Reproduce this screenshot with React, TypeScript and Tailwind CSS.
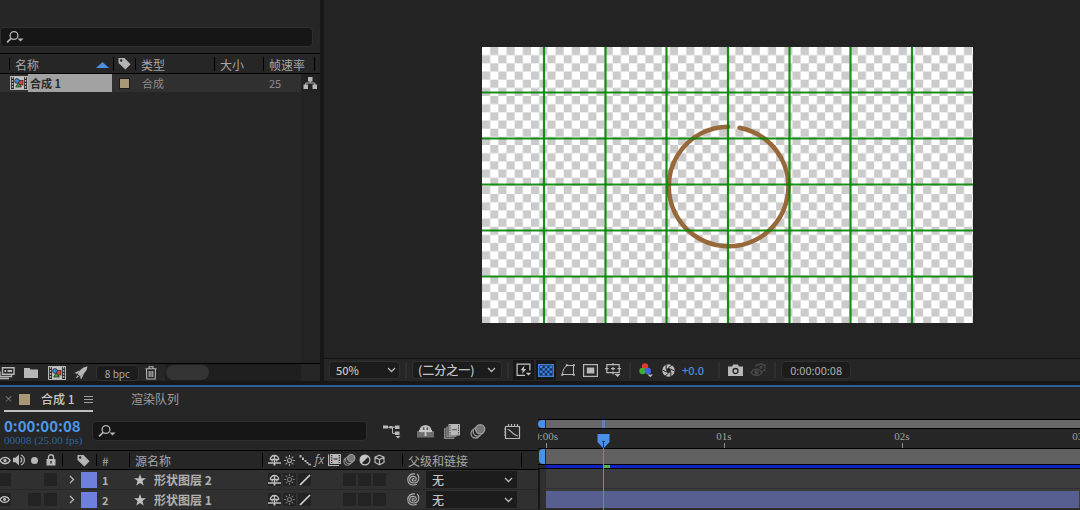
import React from 'react';

type IconProps = { className?: string };

const SearchIcon = () => (
  <svg width="18" height="14" viewBox="0 0 18 14" fill="none" stroke="#b4b4b4" strokeWidth="1.3">
    <circle cx="8" cy="5.5" r="3.9" />
    <path d="M5.2 8.3 1 12.3" strokeWidth="1.6" />
    <path d="M11.5 8.5h6l-3 3z" fill="#b4b4b4" stroke="none" />
  </svg>
);

const TagIcon = () => (
  <svg width="13" height="13" viewBox="0 0 13 13" fill="#b4b4b4" fillRule="evenodd">
    <path d="M.5 1h6L12.6 7.2 7.4 12.6.5 6zM3.2 2.3a1.2 1.2 0 1 0 .01 2.4 1.2 1.2 0 0 0 0-2.4z" />
  </svg>
);

const CompIcon = () => (
  <svg width="18" height="14" viewBox="0 0 18 14">
    <rect x=".5" y=".5" width="17" height="13" fill="#2b2b2b" stroke="#b8b8b8" />
    <path d="M2.5 1v12M15.5 1v12" stroke="#b8b8b8" strokeWidth="1.4" strokeDasharray="1.8 1.2" />
    <rect x="4" y="1" width="10" height="12" fill="#c0c0c0" />
    <rect x="8.5" y="4.5" width="4.5" height="4.5" fill="#e0403a" stroke="#222" strokeWidth=".7" />
    <circle cx="7" cy="5" r="2.4" fill="#3b86d8" stroke="#222" strokeWidth=".7" />
    <path d="m8.5 6.5 2.8 4.500H5.700z" fill="#3f9a35" stroke="#222" strokeWidth=".7" />
  </svg>
);

const FlowIcon = () => (
  <svg width="14" height="14" viewBox="0 0 14 14" fill="#b8b8b8">
    <path d="M5 1h4.500v4.500H5zM.5 8.500H5V13H.5zM9.500 8.500H14V13H9.500z" />
    <path d="M7.200 4v3M2.800 9.500V7h9v2.500" fill="none" stroke="#b8b8b8" />
  </svg>
);

const InterpretIcon = () => (
  <svg width="16" height="14" viewBox="0 0 16 14" fill="none" stroke="#b8b8b8" strokeWidth="1.4">
    <path d="M2.500 1.700h11.500v6.500H2.500z" />
    <path d="M4.500 5h1.600M7.500 5h4.500" strokeWidth="1.8" />
    <path d="M0 5.500V10.500h11.500V8M0 12.500h9" />
  </svg>
);

const FolderIcon = () => (
  <svg width="14" height="12" viewBox="0 0 14 12" fill="#b8b8b8">
    <path d="M0 1h5.5l1.2 1.6H14V11H0z" />
  </svg>
);

const RocketIcon = () => (
  <svg width="14" height="14" viewBox="0 0 14 14" fill="#b8b8b8">
    <path d="M13.500.5C9 1 5.500 4 3.800 8.200l2.200 2C10.500 8.200 13 4.500 13.500.5zM5.700 4.200.5 7l2.900 1zM10 8l-3 5.500-.9-3zM3.500 9.200 1.800 12.500l3.200-1.900z" />
  </svg>
);

const TrashIcon = () => (
  <svg width="12" height="14" viewBox="0 0 12 14" fill="none" stroke="#b8b8b8" strokeWidth="1.1">
    <path d="M.5 2.800h11M4 2.500V.8h4v1.700M1.500 3l.3 10h8.400l.3-10M4.200 5v6M6 5v6M7.800 5v6" />
  </svg>
);

const ChevronDown = ({ className = '' }: IconProps) => (
  <svg className={className} width="9" height="6" viewBox="0 0 9 6" fill="none" stroke="#b8b8b8" strokeWidth="1.3">
    <path d="m1 1 3.500 3.500L8 1" />
  </svg>
);

const FastPreviewIcon = () => (
  <svg width="16" height="14" viewBox="0 0 16 14" fill="none" stroke="#c4c4c4" strokeWidth="1.200">
    <path d="M9 12.400H1.100V1.100h12.800v6.400" />
    <path d="M8.500 2.300 4.600 7.200h2.200L6 11l4.200-5H7.800z" fill="#c4c4c4" stroke="none" />
    <path d="M9.800 9.800h5.400L12.500 12.600z" fill="#c4c4c4" stroke="none" />
  </svg>
);

const TransparencyIcon = () => (
  <svg width="16" height="13" viewBox="0 0 16 13">
    <rect x=".7" y=".7" width="14.600" height="11.600" fill="#14305a" stroke="#3f82dc" strokeWidth="1.400" />
    <path
      d="M2 2h2.400v2.300H2zM6.800 2h2.400v2.300H6.800zM11.600 2H14v2.300h-2.400zM4.400 4.300h2.400v2.400H4.400zM9.200 4.300h2.400v2.400H9.200zM2 6.700h2.400V9H2zM6.800 6.700h2.400V9H6.800zM11.600 6.700H14V9h-2.400zM4.400 9h2.400v2.200H4.400zM9.200 9h2.400v2.200H9.200z"
      fill="#3f82dc"
    />
  </svg>
);

const MaskIcon = () => (
  <svg width="16" height="14" viewBox="0 0 16 14" fill="none" stroke="#b8b8b8">
    <path d="M2.500 11.500C2.700 7 4.500 4 7 2.500h6.500v9z" />
    <path d="M6 1.500h1.500v1.500H6zM13 1.500h1.500v1.500H13zM13 11h1.500v1.500H13zM1.500 11H3v1.500H1.500z" fill="#b8b8b8" strokeWidth=".5" />
  </svg>
);

const RegionIcon = () => (
  <svg width="15" height="13" viewBox="0 0 15 13">
    <rect x=".6" y=".6" width="13.800" height="11.800" fill="none" stroke="#b8b8b8" strokeWidth="1.200" />
    <rect x="3.800" y="3.500" width="7.500" height="6" fill="#b8b8b8" />
  </svg>
);

const GuidesIcon = () => (
  <svg width="16" height="16" viewBox="0 0 16 16" fill="none" stroke="#b8b8b8" strokeWidth="1.200">
    <path d="M1.800 2.600h12.400v8H1.800zM8 1v2.500M8 9.500v3M0 6.600h3.500M12.500 6.600H16M6 6.600h4M8 5v3.200" />
    <path d="M9.500 12h6l-3 3z" fill="#b8b8b8" stroke="none" />
  </svg>
);

const ChannelIcon = () => (
  <svg width="15" height="15" viewBox="0 0 15 15">
    <circle cx="6" cy="3.500" r="3.200" fill="#e8352b" />
    <circle cx="3.500" cy="8" r="3.200" fill="#3fae35" />
    <circle cx="8.800" cy="8" r="3.200" fill="#3f62e8" />
    <path d="M8.500 11.500h5.500L11.300 14.300z" fill="#b8b8b8" />
  </svg>
);

const ApertureIcon = () => (
  <svg width="13" height="13" viewBox="0 0 13 13">
    <circle cx="6.500" cy="6.500" r="6.200" fill="#b8b8b8" />
    <path
      d="M6.500 3.800 10 .9M8.800 5.100l3.800 2M8.800 7.900l0 4.400M6.500 9.200 3 12.100M4.200 7.900.4 5.900M4.200 5.100V.7"
      stroke="#262626"
      strokeWidth="1"
    />
    <path d="m6.500 3.800 2.300 1.300v2.800L6.500 9.200 4.200 7.900V5.100z" fill="#262626" />
  </svg>
);

const CameraIcon = () => (
  <svg width="15" height="13" viewBox="0 0 15 13">
    <path d="M0 2.500h4L5.200.5h4.600L11 2.500h4V12H0z" fill="#b8b8b8" />
    <circle cx="7.500" cy="7" r="2.500" fill="none" stroke="#262626" strokeWidth="1.300" />
  </svg>
);

const ShowSnapshotIcon = () => (
  <svg width="16" height="14" viewBox="0 0 16 14" fill="none" stroke="#464646" strokeWidth="1.300">
    <path d="M1 9.300c2.500-4.200 8.500-4.200 11 0-2.500 4.200-8.500 4.200-11 0z" />
    <circle cx="6.500" cy="9.300" r="1.600" fill="#464646" />
    <path d="M6 4V2h2.500l.8-1h3l.8 1H15v5.500h-2.500" />
    <circle cx="11" cy="4.300" r="1" />
  </svg>
);

const FlowchartIcon = () => (
  <svg width="18" height="15" viewBox="0 0 18 15" fill="#b8b8b8">
    <path d="M0 1.500h5v3H0zM6.500 2h3v2.500h-3zM12 1.500h4.500v3.500H12zM12 7.500h4.500V11H12z" />
    <path d="M5 3.200h7M9.500 3.200v6.200H12" fill="none" stroke="#b8b8b8" />
    <path d="M12.500 12h5L15 14.500z" />
  </svg>
);

const ShyToolIcon = () => (
  <svg width="17" height="14" viewBox="0 0 17 14">
    <path d="M0 7h17v6.500H0z" fill="#6e6e6e" />
    <path d="M2.500 6.500a6 5.500 0 0 1 12 0z" fill="#b8b8b8" />
    <path d="M2 7h13M8.500 2v10" stroke="#c8c8c8" strokeWidth="1.800" />
    <path d="M5 5v3.500M12 5v3.500" stroke="#c8c8c8" strokeWidth="1.200" />
    <path d="M6.800 3.500v2.500M10.200 3.500v2.500" stroke="#262626" strokeWidth="1" />
  </svg>
);

const FrameBlendToolIcon = () => (
  <svg width="16" height="15" viewBox="0 0 16 15">
    <path d="M.8 4v10.200h9.500M3 2.500v9.800h9.500" fill="none" stroke="#8c8c8c" strokeWidth="1.500" />
    <path d="M4.500 0H16v11.500H4.500z" fill="#b8b8b8" />
    <path d="M6 1v10M14.500 1v10" stroke="#333" strokeDasharray="1.200 1.200" />
    <path d="M8 5.700h5" stroke="#555" />
  </svg>
);

const MotionBlurIcon = ({ className = '' }: IconProps) => (
  <svg className={className} viewBox="0 0 16 15" fill="none" stroke="#9a9a9a" strokeWidth="1.300">
    <circle cx="5.500" cy="9.500" r="4.500" />
    <circle cx="7.600" cy="7.600" r="4.500" fill="#262626" />
    <circle cx="10.200" cy="5.300" r="4.600" fill="#767676" stroke="#a0a0a0" />
  </svg>
);

const GraphIcon = () => (
  <svg width="17" height="17" viewBox="0 0 17 17" fill="none" stroke="#b8b8b8" strokeWidth="1.200">
    <path d="M1.500 3.500h14v12h-14zM4.500 1v2.500M7.500 1v2.500M10.500 1v2.500M13.500 1v2.500M0 6h1.500M0 9h1.500M0 12h1.500" />
    <path d="M3.500 6.500c4 0 4.500 6 10.500 6.500" />
  </svg>
);

const EyeIcon = () => (
  <svg width="12" height="9" viewBox="0 0 12 9" fill="none" stroke="#c4c4c4" strokeWidth="1.300">
    <path d="M0 4.500C2.300.2 7.800.2 10.100 4.500 7.800 8.800 2.300 8.800 0 4.500z" />
    <circle cx="5" cy="4.500" r="1.600" fill="#c4c4c4" stroke="none" />
  </svg>
);

const SpeakerIcon = () => (
  <svg width="13" height="12" viewBox="0 0 13 12" fill="none" stroke="#b8b8b8" strokeWidth="1.200">
    <path d="M0 3.800h2.500L6 .6v10.800L2.500 8.200H0z" fill="#b8b8b8" stroke="none" />
    <path d="M7.500 3.500c1.500 1.500 1.500 3.500 0 5M8 1c4.500 2 4.500 8 0 10" />
  </svg>
);

const LockIcon = () => (
  <svg width="10" height="12" viewBox="0 0 10 12">
    <path d="M.5 5h9v6.500h-9z" fill="#b8b8b8" />
    <path d="M2.500 5.500V3.200a2.500 2.500 0 0 1 5 0v2.300" fill="none" stroke="#b8b8b8" strokeWidth="1.400" />
    <path d="M5 7v2.500" stroke="#262626" strokeWidth="1.400" />
  </svg>
);

const ShyIcon = () => (
  <svg className="shrink-0" width="13" height="12" viewBox="0 0 13 12" fill="none" stroke="#c0c0c0" strokeWidth="1.300">
    <path d="M2.200 5.500a4.300 4 0 0 1 8.600 0M0 9h13M6.500 2v8.500M2.200 5.500h8.600M4.200 5.500v2M8.800 5.500v2M5.500 10.800h2" />
  </svg>
);

const SunIcon = ({ className = '' }: IconProps) => (
  <svg className={className} width="11" height="11" viewBox="0 0 11 11" fill="none" stroke="currentColor" strokeWidth="1.100">
    <circle cx="5.500" cy="5.500" r="2" />
    <path d="M5.500 0v2.200M5.500 8.800V11M0 5.500h2.200M8.800 5.500H11M1.700 1.700 3.200 3.200M7.800 7.800l1.500 1.500M1.700 9.300l1.500-1.500M7.800 3.200l1.500-1.500" />
  </svg>
);

const QualityHeadIcon = () => (
  <svg width="12" height="11" viewBox="0 0 12 11" fill="#b8b8b8">
    <path d="M.5 0h2v2.500h-2zM3 2.500h2V5H3zM5.500 5h2v2h-2zM7.500 7h2v1.800h-2zM9.300 8.800H12v1.500H9.300z" />
  </svg>
);

const QualityIcon = () => (
  <svg width="12" height="12" viewBox="0 0 12 12" stroke="#d0d0d0" strokeWidth="1.700">
    <path d="M1 11 11 1" />
  </svg>
);

const FilmIcon = () => (
  <svg width="13" height="12" viewBox="0 0 13 12">
    <path d="M.6.5v11H11" fill="none" stroke="#b8b8b8" strokeWidth="1.200" />
    <path d="M2 0h11v10H2z" fill="#b8b8b8" />
    <path d="M3.700 1v8M11.300 1v8" stroke="#222" strokeWidth="1.200" strokeDasharray="1.300 1" />
    <path d="M5.500 5h4" stroke="#222" />
  </svg>
);

const AdjustIcon = () => (
  <svg width="12" height="12" viewBox="0 0 12 12">
    <circle cx="6" cy="6" r="4.900" fill="none" stroke="#c4c4c4" strokeWidth="1.200" />
    <path d="M2.500 9.500A4.900 4.900 0 0 1 9.500 2.500z" fill="#c4c4c4" />
  </svg>
);

const CubeIcon = () => (
  <svg width="11" height="12" viewBox="0 0 11 12" fill="none" stroke="#b8b8b8" strokeWidth="1.200">
    <path d="m5.500 1.200 4.500 2v5.300l-4.500 2.300L1 8.500V3.200zM1 3.200l4.500 2.300L10 3.200M5.500 5.500v5" />
  </svg>
);

const SpiralIcon = () => (
  <svg width="13" height="13" viewBox="0 0 13 13" fill="none" stroke="#b0b0b0" strokeWidth="1.100">
    <path d="M7.200 6.300c-.3-1.100-2.200-.8-2.100.6.100 1.700 4.100 1.700 4.200-1.100 0-3.300-6.600-3.500-6.700 1 0 4.500 9 4.400 9.200-1.600.1-1.900-.7-3.300-1.600-4.200M8 1C4.500.2.800 2.500.8 6.500c0 2.800 2 5.200 5 5.500 1.500.1 2.800-.2 4-.9" />
  </svg>
);

const StarIcon = () => (
  <svg width="12" height="12" viewBox="0 0 12 12" fill="#c0c0c0">
    <path d="M6 0 7.500 4.300H12L8.400 7l1.300 4.500L6 8.900l-3.700 2.600L3.600 7 0 4.300h4.500z" />
  </svg>
);

const Divider = () => <div className="h-4 w-[2px] shrink-0 bg-[#303030]" />;

const SearchField = ({ label }: { label: string }) => (
  <label className="flex h-5 items-center rounded-sm border border-[#2f2f2f] bg-[#161616] pl-[5px]">
    <SearchIcon />
    <input aria-label={label} type="text" className="ml-1 min-w-0 flex-1 bg-transparent text-xs outline-none" />
  </label>
);

const ProjectPanel = () => (
  <section className="flex w-[320px] shrink-0 flex-col bg-[#262626]">
    <div className="pt-[27px] pr-[7px] pb-[6px]">
      <SearchField label="搜索项目" />
    </div>
    <div className="flex flex-1 flex-col">
      <table className="w-full table-fixed border-t border-black text-xs">
        <colgroup>
          <col className="w-[10px]" />
          <col className="w-[104px]" />
          <col className="w-[22px]" />
          <col className="w-[79px]" />
          <col className="w-[49px]" />
          <col className="w-[37px]" />
          <col />
        </colgroup>
        <thead className="text-left text-[#a6a6a6]">
          <tr className="h-5 border-b border-black">
            <th><div className="h-3 border-r border-black" /></th>
            <th className="font-normal">
              <div className="flex h-[14px] items-center justify-between border-r border-black pt-[2px] pr-1 pl-[5px]">
                名称
                <svg width="13" height="6" viewBox="0 0 13 6" fill="#4a8fe8"><path d="M6.500 0 13 6H0z" /></svg>
              </div>
            </th>
            <th>
              <div className="flex h-3 items-center justify-center border-r border-black"><TagIcon /></div>
            </th>
            <th className="font-normal">
              <div className="flex h-[14px] items-center border-r border-black pt-[2px] pl-[5px]">类型</div>
            </th>
            <th className="font-normal">
              <div className="flex h-[14px] items-center border-r border-black pt-[2px] pl-[5px]">大小</div>
            </th>
            <th colSpan={2} className="pr-[5px] font-normal">
              <div className="flex h-[14px] items-center border-r border-black pt-[2px] pl-[5px] whitespace-nowrap">帧速率</div>
            </th>
          </tr>
        </thead>
        <tbody>
          <tr className="h-[18px] bg-[#303030] text-[#8c8c8c]">
            <td colSpan={2}>
              <div className="flex h-[18px] items-center pr-[2px] pl-[10px]">
                <CompIcon />
                <span className="flex h-[18px] flex-1 items-center bg-[#a2a2a2] pl-[2px] text-[11px] font-bold text-[#2a2a2a]">合成 1</span>
              </div>
            </td>
            <td><div className="ml-[5px] size-[11px] border border-[#1c1c1c] bg-[#a89878]" /></td>
            <td className="pl-[6px] text-[11px] leading-4">合成</td>
            <td />
            <td className="pl-[5px] text-[11px] leading-4">25</td>
            <td className="bg-[#222222]"><div className="flex pl-[2px]"><FlowIcon /></div></td>
          </tr>
        </tbody>
      </table>
      <div className="ml-auto w-[19px] flex-1 bg-[#232323]" />
    </div>
    <div className="flex h-[18px] items-center border-t border-black text-[#b8b8b8]">
      <button aria-label="解释素材"><InterpretIcon /></button>
      <button aria-label="新建文件夹" className="ml-2"><FolderIcon /></button>
      <button aria-label="新建合成" className="ml-[10px]"><CompIcon /></button>
      <button aria-label="项目设置" className="ml-2"><RocketIcon /></button>
      <button className="ml-2 h-4 w-[43px] rounded-sm border border-[#303030] bg-[#1c1c1c] text-[10px] leading-4 text-[#a8a8a8]">8 bpc</button>
      <button aria-label="删除" className="ml-[6px]"><TrashIcon /></button>
      <div className="mr-[19px] ml-2 h-full flex-1 bg-[#1f1f1f] px-[1px] pt-[1px]">
        <div className="h-[15px] w-[43px] rounded-full bg-[#343434]" />
      </div>
    </div>
  </section>
);

const verticalGuides = [62, 123.5, 184.5, 246, 307.5, 368.5, 430];
const horizontalGuides = [45.5, 91.5, 137.5, 183.5, 229.5];

const Preview = () => (
  <svg width="491" height="276" viewBox="0 0 491 276">
    <defs>
      <pattern id="checker" width="16.340" height="16.340" patternUnits="userSpaceOnUse">
        <rect width="16.340" height="16.340" fill="#fff" />
        <path d="M8.170 0h8.170v8.170H8.170zM0 8.170h8.170v8.170H0z" fill="#cbcbcb" />
      </pattern>
    </defs>
    <rect width="491" height="276" fill="url(#checker)" />
    <path d="M257.500 80.700A59.800 59.800 0 1 1 246 79.700" fill="none" stroke="#96683a" strokeWidth="4.500" strokeLinecap="round" />
    <g stroke="#008500" strokeOpacity=".9" strokeWidth="2.200">
      {verticalGuides.map((x) => <path key={x} d={`M${x} 0V276`} />)}
      {horizontalGuides.map((y) => <path key={y} d={`M0 ${y}H491`} />)}
    </g>
  </svg>
);

const ViewerPanel = () => (
  <section className="flex min-w-0 flex-1 flex-col bg-[#232323]">
    <div className="flex flex-1 items-center justify-center pt-3 pl-[50px]">
      <Preview />
    </div>
    <div className="flex h-[23px] items-center border-t border-[#141414] bg-[#262626] pl-[5px] text-[11px] font-medium text-[#c4c4c4]">
      <div className="relative mr-[5px] flex items-center">
        <select aria-label="放大率" className="h-[18px] w-[71px] appearance-none rounded-sm border border-[#303030] bg-[#1c1c1c] pl-[6px] leading-4 outline-none">
          <option>50%</option>
        </select>
        <ChevronDown className="pointer-events-none absolute right-1" />
      </div>
      <Divider />
      <div className="relative mx-[5px] flex items-center">
        <select aria-label="分辨率" className="h-[18px] w-[90px] appearance-none rounded-sm border border-[#303030] bg-[#1c1c1c] pl-[5px] text-xs leading-4 outline-none">
          <option>(二分之一)</option>
        </select>
        <ChevronDown className="pointer-events-none absolute right-[6px]" />
      </div>
      <Divider />
      <button aria-label="快速预览" className="ml-1 flex h-5 w-[21px] items-center justify-center bg-[#181818]"><FastPreviewIcon /></button>
      <button aria-label="透明网格" className="ml-[2px] flex h-5 w-5 items-center justify-center bg-[#181818]"><TransparencyIcon /></button>
      <button aria-label="蒙版可见性" className="ml-1"><MaskIcon /></button>
      <button aria-label="目标区域" className="ml-[7px]"><RegionIcon /></button>
      <button aria-label="网格和参考线" className="mr-2 ml-[7px]"><GuidesIcon /></button>
      <Divider />
      <button aria-label="通道" className="ml-2"><ChannelIcon /></button>
      <button aria-label="重置曝光度" className="ml-2"><ApertureIcon /></button>
      <button className="mr-[14px] ml-[7px] text-[#4a90d9]">+0.0</button>
      <Divider />
      <button aria-label="拍摄快照" className="ml-2"><CameraIcon /></button>
      <button aria-label="显示快照" className="mr-2 ml-[7px]"><ShowSnapshotIcon /></button>
      <Divider />
      <button className="ml-[5px] h-[18px] w-[70px] rounded-sm border border-[#303030] bg-[#1c1c1c] leading-4 font-normal text-[#b0b0b0]">0:00:00:08</button>
    </div>
  </section>
);

const Box = ({ children }: { children?: React.ReactNode }) => (
  <div className="flex h-[13px] w-[13px] items-center justify-center bg-[#232323]">{children}</div>
);

const switchIcons = [
  <ShyIcon />,
  <SunIcon />,
  <QualityHeadIcon />,
  <span className="font-[Open_Sans] text-xs leading-3 italic">fx</span>,
  <FilmIcon />,
  <MotionBlurIcon className="h-3 w-[13px]" />,
  <AdjustIcon />,
  <CubeIcon />,
];

const layers = [
  { id: 1, name: '形状图层 2', visible: false, solo: false },
  { id: 2, name: '形状图层 1', visible: true, solo: true },
];

const LayerTable = () => (
  <table className="w-full table-fixed border-t border-black text-xs">
    <colgroup>
      <col className="w-[12px]" />
      <col className="w-[15px]" />
      <col className="w-[15px]" />
      <col className="w-[21px]" />
      <col className="w-[16px]" />
      <col className="w-[18px]" />
      <col className="w-[33px]" />
      <col className="w-[133px]" />
      <col className="w-[140px]" />
      <col />
    </colgroup>
    <thead className="text-left text-[#a6a6a6]">
      <tr className="h-[19px] border-b border-black">
        <th><EyeIcon /></th>
        <th><div className="flex justify-center"><SpeakerIcon /></div></th>
        <th><div className="ml-1 size-[7px] rounded-full bg-[#b8b8b8]" /></th>
        <th><div className="flex h-3 items-center border-r border-black pl-[4px]"><LockIcon /></div></th>
        <th colSpan={2}>
          <div className="flex h-3 items-center justify-end border-r border-black pr-[6px]"><TagIcon /></div>
        </th>
        <th className="font-normal"><div className="flex h-[14px] items-center border-r border-black pt-[2px] pl-[5px]">#</div></th>
        <th className="font-normal"><div className="flex h-[14px] items-center border-r border-black pt-[2px] pl-[5px]">源名称</div></th>
        <th className="font-normal">
          <div className="flex h-3 items-center border-r border-black pl-1">
            {switchIcons.map((icon, i) => (
              <span key={i} className="flex w-[15px] justify-center">{icon}</span>
            ))}
          </div>
        </th>
        <th className="pr-4 font-normal"><div className="flex h-[14px] items-center border-r border-black pt-[2px] pl-[5px]">父级和链接</div></th>
      </tr>
    </thead>
    <tbody className="bg-[#303030] text-[#b0b0b0]">
      {layers.map((layer) => (
        <tr key={layer.id} className="h-5 border-b border-[#282828]">
          <td>
            <div className="flex h-[13px] w-[11px] items-center overflow-hidden bg-[#232323]">{layer.visible && <EyeIcon />}</div>
          </td>
          <td />
          <td>{layer.solo && <div className="pl-[1px]"><Box /></div>}</td>
          <td><div className="pl-[2px]"><Box /></div></td>
          <td>
            <button aria-label="展开图层" className="flex w-full justify-center pl-[2px]">
              <svg width="6" height="9" viewBox="0 0 6 9" fill="none" stroke="#b8b8b8" strokeWidth="1.300"><path d="m1 1 3.500 3.500L1 8" /></svg>
            </button>
          </td>
          <td><div className="ml-[2px] size-4 bg-[#6f80dc]" /></td>
          <td className="pl-[5px] text-[11px] leading-4 font-bold">{layer.id}</td>
          <td>
            <div className="flex items-center gap-2 pl-1 leading-4 font-bold"><StarIcon />{layer.name}</div>
          </td>
          <td>
            <div className="flex pl-1">
              <span className="flex w-[15px] justify-center"><Box><ShyIcon /></Box></span>
              <span className="flex w-[15px] justify-center"><Box><SunIcon className="text-[#777]" /></Box></span>
              <span className="flex w-[15px] justify-center"><Box><QualityIcon /></Box></span>
              <span className="ml-[30px] flex w-[15px] justify-center"><Box /></span>
              <span className="flex w-[15px] justify-center"><Box /></span>
              <span className="flex w-[15px] justify-center"><Box /></span>
            </div>
          </td>
          <td>
            <div className="flex items-center pl-1">
              <SpiralIcon />
              <select aria-label={`${layer.name} 父级`} className="ml-[6px] h-[17px] w-[91px] appearance-none bg-[#1c1c1c] pl-[6px] text-xs leading-4 font-medium text-[#c4c4c4] outline-none">
                <option>无</option>
              </select>
              <ChevronDown className="pointer-events-none -ml-[13px]" />
            </div>
          </td>
        </tr>
      ))}
    </tbody>
  </table>
);

const seconds = ['0:00s', '01s', '02s', '03s'];

const TimeRuler = () => (
  <div className="relative mt-[7px] min-w-0 flex-1 overflow-hidden">
    <div className="flex h-[10px] border-y border-black">
      <div className="w-[7px] rounded-l-full bg-[#4a8fe8]" />
      <div className="ml-[1px] flex-1 bg-[#686868]" />
    </div>
    <div className="-ml-[81px] flex h-5 overflow-hidden border-b border-black font-[Liberation_Serif] text-[11px] text-[#a0a0a0]">
      {seconds.map((label) => (
        <div key={label} className="flex w-[178px] shrink-0 flex-col items-center justify-between pt-[1px]">
          <span className="leading-3">{label}</span>
          <span className="h-[5px] w-px bg-[#8c8c8c]" />
        </div>
      ))}
    </div>
    <div className="flex h-4 border-b border-black">
      <div className="ml-[1px] w-[6px] rounded-l bg-[#4a8fe8]" />
      <div className="ml-[1px] flex-1 bg-[#616161]" />
    </div>
    <div className="flex h-1 border-b border-black">
      <div className="ml-2 w-[57px] bg-[#1420c4]" />
      <div className="w-[7px] bg-[#55b848]" />
      <div className="flex-1 bg-[#1420c4]" />
    </div>
    <div className="border-l-2 border-[#161616] bg-[#303030] pl-[6px]">
      <div className="h-5 border-b border-[#303030] bg-[#3c3c3c]" />
      <div className="h-5 border-b border-[#303030] bg-[#3c3c3c] pt-[2px]">
        <div className="mr-[1px] h-[17px] bg-[#575e90]" />
      </div>
    </div>
    <div className="absolute top-[1px] bottom-0 left-[59px] flex w-[13px] flex-col items-center">
      <div className="h-2 w-[3px] bg-[#5b8fd6]/70" />
      <svg className="mt-[6px] shrink-0" width="13" height="14" viewBox="0 0 13 14">
        <path d="M.5 0h12v8L7 14H6L.5 8z" fill="#4a8fe8" />
        <path d="M5 7.500h3M6.500 7.500V14" stroke="#1d3c66" />
      </svg>
      <div className="w-px flex-1 bg-[#4a8fe8]" />
    </div>
  </div>
);

const TimelinePanel = () => (
  <section className="border-t-2 border-[#2d5f9e] bg-[#262626]">
    <div className="flex h-[25px] items-stretch pl-1 text-xs">
      <div className="flex w-[89px] items-center border-b-2 border-[#c0c0c0] pt-[1px] text-[#c8c8c8]">
        <button aria-label="关闭" className="w-[5px] text-[9px] text-[#9a9a9a]">×</button>
        <span className="ml-[10px] size-[11px] bg-[#a89878]" />
        <span className="ml-[11px] font-medium">合成 1</span>
        <button aria-label="面板菜单" className="ml-auto">
          <svg width="9" height="9" viewBox="0 0 9 9" stroke="#a0a0a0"><path d="M0 1.500h9M0 4.500h9M0 7.500h9" /></svg>
        </button>
      </div>
      <button className="ml-[38px] pb-[1px] text-[#a0a0a0]">渲染队列</button>
    </div>
    <div className="flex">
      <div className="flex w-[538px] shrink-0 flex-col">
        <div className="flex h-[38px] items-center pl-1">
          <div className="w-[88px] pt-[2px]">
            <div className="text-[15px] leading-4 font-bold text-[#4f97e8]">0:00:00:08</div>
            <div className="font-[Liberation_Serif] text-[11px] leading-3 text-[#2f629c]">00008 (25.00 fps)</div>
          </div>
          <div className="w-[275px]"><SearchField label="搜索图层" /></div>
          <button aria-label="合成微型流程图" className="ml-4"><FlowchartIcon /></button>
          <button aria-label="隐藏图层" className="ml-4"><ShyToolIcon /></button>
          <button aria-label="帧混合" className="ml-[10px]"><FrameBlendToolIcon /></button>
          <button aria-label="运动模糊" className="ml-[10px]"><MotionBlurIcon className="h-[15px] w-4" /></button>
          <button aria-label="图表编辑器" className="ml-[18px]"><GraphIcon /></button>
        </div>
        <LayerTable />
      </div>
      <TimeRuler />
    </div>
  </section>
);

const App = () => {
  return (
    <main className="flex h-screen flex-col overflow-hidden bg-[#171717] font-['Noto_Sans_CJK_SC',sans-serif] select-none">
      <div className="flex min-h-0 flex-1 gap-1 pb-1">
        <ProjectPanel />
        <ViewerPanel />
      </div>
      <TimelinePanel />
    </main>
  );
};

export default App;
